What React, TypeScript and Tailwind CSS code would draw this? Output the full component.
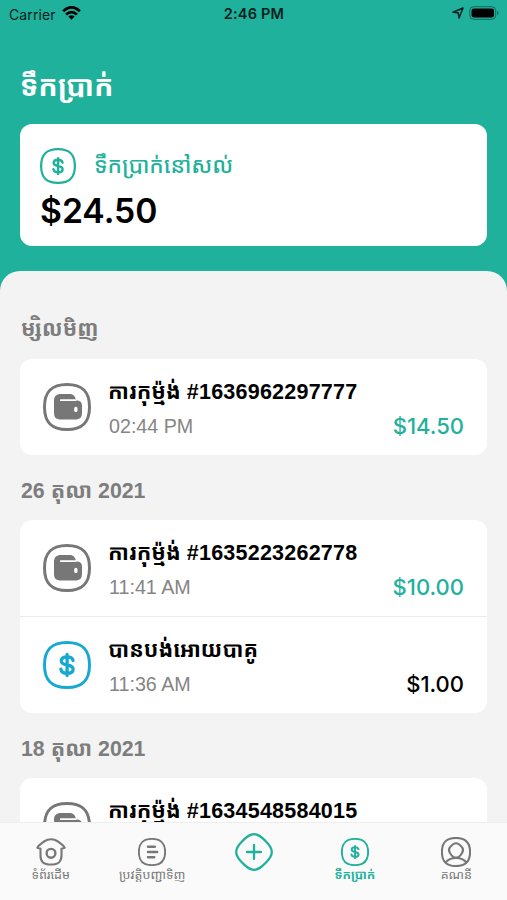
import type { ReactNode } from "react";

const latin = "font-['Liberation_Sans','Noto_Sans_Khmer','Khmer_OS',sans-serif]";
const inter = "font-['Inter','Liberation_Sans',sans-serif]";

function Squircle({ width = 3 }: { width?: number }) {
  return (
    <path
      d="M24 1.500C39.500 1.500 46.500 8.500 46.500 24S39.500 46.500 24 46.500 1.500 39.500 1.500 24 8.500 1.500 24 1.500Z"
      fill="none"
      stroke="currentColor"
      strokeWidth={width}
    />
  );
}

function DollarIcon({ className, width = 3 }: { className: string; width?: number }) {
  return (
    <svg viewBox="0 0 48 48" className={className} fill="none">
      <Squircle width={width} />
      <path
        d="M30 19.500C29.500 17 27.500 15.800 24.200 15.800 20.500 15.800 18.300 17.400 18.300 20 18.300 22.700 20.700 23.400 24.200 24 28 24.700 30.100 25.600 30.100 28.300 30.100 30.900 27.700 32.400 24.200 32.400 20.600 32.400 18.300 30.900 17.900 28.200M24.100 13.500V34.500"
        stroke="currentColor"
        strokeWidth="3.300"
        strokeLinecap="round"
      />
    </svg>
  );
}

function WalletIcon() {
  return (
    <svg viewBox="0 0 48 48" className="size-12 shrink-0 text-[#777]">
      <Squircle />
      <path
        d="M18 11H26.500C30.500 11 32.500 13.500 33 17.500H34.500C37.500 18 39 19.500 39 22.500V29.500C39 34.500 37 36.500 32 36.500H18C13 36.500 11 34.500 11 29.500V18C11 13 13.500 11 18 11Z"
        fill="currentColor"
      />
      <path d="M17.800 17.200H32.500" stroke="white" strokeWidth="1.800" strokeLinecap="round" />
      <rect x="31.200" y="23.800" width="3.300" height="5.200" rx="1.600" fill="white" />
    </svg>
  );
}

function StatusBar() {
  return (
    <div className={`grid h-7 grid-cols-3 items-center pr-2 pl-[9px] text-[14px] text-[#05201c] ${inter}`}>
      <div className="flex items-center gap-1.5">
        <span className="tracking-[0.1px]">Carrier</span>
        <svg viewBox="0 0 19 14" className="mb-[2px] h-[14px] w-[19px] text-black" fill="none" stroke="currentColor" strokeWidth="2.800">
          <path d="M1.200 5.300C6-.1 13-.1 17.800 5.300M4.100 8.600C7.300 5.300 11.700 5.300 14.900 8.600" />
          <path d="M6.400 10.500C8.200 8.800 10.800 8.800 12.600 10.500L9.500 13.700Z" fill="currentColor" stroke="none" />
        </svg>
      </div>
      <div className="text-center text-[14.500px] font-semibold tracking-[0.200px] whitespace-nowrap">2:46 PM</div>
      <div className="flex items-center justify-end gap-[5px] pb-[2px]">
        <svg viewBox="0 0 12 12" className="size-3" fill="none" stroke="currentColor" strokeWidth="1.500" strokeLinejoin="round">
          <path d="M11 1 1 5.200 6.200 5.800 7 11Z" />
        </svg>
        <svg viewBox="0 0 30 14" className="h-[14px] w-[30px]">
          <rect x="0.700" y="0.700" width="26" height="12.600" rx="4" fill="none" stroke="currentColor" strokeOpacity="0.500" />
          <rect x="2.500" y="2.500" width="22.500" height="9" rx="2.300" fill="black" />
          <path d="M28 5C30 5.500 30 8.500 28 9Z" fill="currentColor" fillOpacity="0.500" />
        </svg>
      </div>
    </div>
  );
}

function Heading({ children, className }: { children: ReactNode; className: string }) {
  return (
    <h2 className={`flex items-center pl-px text-[21.300px] font-bold whitespace-nowrap text-[#7d7d7d] ${className}`}>
      {children}
    </h2>
  );
}

function Row({ icon, title, time, amount, color = "text-[#1fb19c]" }: {
  icon: ReactNode;
  title: ReactNode;
  time?: string;
  amount?: string;
  color?: string;
}) {
  return (
    <div className="flex h-24 items-center pr-[23px] pl-[23px]">
      {icon}
      <div className="ml-[17px] flex h-24 flex-1 flex-col pt-[19px]">
        <div className="h-7 text-[21.500px] leading-7 font-bold whitespace-nowrap text-black">{title}</div>
        {time && (
          <div className="mt-[7px] flex h-7 items-center justify-between">
            <span className="pl-px text-[19.700px] text-[#858585]">{time}</span>
            <span className={`-mt-[2px] text-[22px] font-medium ${inter} ${color}`}>{amount}</span>
          </div>
        )}
      </div>
    </div>
  );
}

function Payment({ id }: { id: string }) {
  return (
    <span className="flex">
      <span>ការកុម្ម៉ង់</span>
      <span className="ml-1.5 tracking-[0.230px]">#{id}</span>
    </span>
  );
}

function Tab({ icon, label, active = false }: { icon: ReactNode; label?: string; active?: boolean }) {
  return (
    <div className={`flex flex-1 flex-col items-center ${active ? "font-bold text-[#1fb19c]" : "text-[#777]"}`}>
      <div className="flex h-[30px] items-center">{icon}</div>
      {label && <span className="h-4 text-[12.500px] leading-4 whitespace-nowrap">{label}</span>}
    </div>
  );
}

export default function App() {
  return (
    <div className={`flex h-[900px] w-[507px] flex-col overflow-hidden bg-[#1fb19c] ${latin}`}>
      <StatusBar />
      <header className="flex h-24 shrink-0 items-center px-5 pt-5">
        <h1 className="text-[28.700px] leading-10 font-bold whitespace-nowrap text-white">ទឹកប្រាក់</h1>
      </header>
      <section className="mx-5 h-[122px] shrink-0 rounded-xl bg-white px-5 pt-6">
        <div className="flex h-9 items-center gap-[18px] text-[#1fb19c]">
          <DollarIcon className="size-9 shrink-0" width={3} />
          <span className="text-[22.300px] leading-9 font-medium whitespace-nowrap">ទឹកប្រាក់នៅសល់</span>
        </div>
        <div className={`mt-[7px] text-[33.700px] leading-10 font-semibold text-black ${inter}`}>$24.50</div>
      </section>
      <main className="mt-[25px] flex min-h-0 flex-1 flex-col overflow-hidden rounded-t-[20px] bg-[#f3f3f3] px-5">
        <Heading className="h-[88px] shrink-0 pt-[29px]">ម្សិលមិញ</Heading>
        <div className="h-24 shrink-0 rounded-xl bg-white">
          <Row icon={<WalletIcon />} title={<Payment id="1636962297777" />} time="02:44 PM" amount="$14.50" />
        </div>
        <Heading className="h-[65px] shrink-0 pt-2">
          <span>26</span><span className="mx-1.5">តុលា</span><span>2021</span>
        </Heading>
        <div className="h-[193px] shrink-0 rounded-xl bg-white">
          <Row icon={<WalletIcon />} title={<Payment id="1635223262778" />} time="11:41 AM" amount="$10.00" />
          <div className="border-t border-[#eaeaea]">
            <Row
              icon={<DollarIcon className="size-12 shrink-0 text-[#18a9d2]" />}
              title="បានបង់អោយបាគូ"
              time="11:36 AM"
              amount="$1.00"
              color="text-black"
            />
          </div>
        </div>
        <Heading className="h-[65px] shrink-0 pt-2">
          <span>18</span><span className="mx-1.5">តុលា</span><span>2021</span>
        </Heading>
        <div className="h-24 shrink-0 rounded-xl bg-white">
          <Row icon={<WalletIcon />} title={<Payment id="1634548584015" />} />
        </div>
      </main>
      <nav className="flex h-[78px] shrink-0 border-t border-[#eee] bg-[#fafafa] pt-[14px]">
        <Tab
          label="ទំព័រដើម"
          icon={
            <svg viewBox="0 0 30 28" className="h-7 w-[30px]" fill="none" stroke="currentColor" strokeWidth="2.100" strokeLinecap="round" strokeLinejoin="round">
              <path d="M4.500 10.800 1.300 9.700C2 7 5 6 8 3.500Q15-1 22 3.500C25 6 28 7 28.700 9.700L25.500 10.800V17.500C25.500 24 22.500 26.500 15 26.500S4.500 24 4.500 17.500Z" />
              <circle cx="15" cy="15.300" r="4.400" strokeWidth="2.400" />
            </svg>
          }
        />
        <Tab
          label="ប្រវត្តិបញ្ជាទិញ"
          icon={
            <svg viewBox="0 0 48 48" className="size-7" fill="none">
              <Squircle width={3.300} />
              <path d="M17 15H29M17 24H33M17 33H28" stroke="currentColor" strokeWidth="4" strokeLinecap="round" />
            </svg>
          }
        />
        <Tab
          icon={
            <svg viewBox="0 0 38 38" className="size-[38px]" fill="none" stroke="#1fb19c" strokeWidth="2.300" strokeLinecap="round">
              <path d="M19 1.200C23 1.200 25.500 3 31 8.500 35 12.500 36.800 15 36.800 19S35 25.500 31 29.500C25.500 35 23 36.800 19 36.800S12.500 35 7 29.500C3 25.500 1.200 23 1.200 19S3 12.500 7 8.500C12.500 3 15 1.200 19 1.200ZM19 12V26M12 19H26" />
            </svg>
          }
        />
        <Tab active label="ទឹកប្រាក់" icon={<DollarIcon className="size-7" width={3.300} />} />
        <Tab
          label="គណនី"
          icon={
            <svg viewBox="0 0 48 48" className="size-[30px]" fill="none" stroke="currentColor" strokeWidth="3.300">
              <Squircle width={3.300} />
              <path d="M24 10C28 10 31 13 34 17 36 20 35.500 23 33.500 26 31 30 28 33 24 33S17 30 14.500 26C12.500 23 12 20 14 17 17 13 20 10 24 10ZM7 41C11 36 16.500 33.500 24 33.500S37 36 41 41" />
            </svg>
          }
        />
      </nav>
    </div>
  );
}
